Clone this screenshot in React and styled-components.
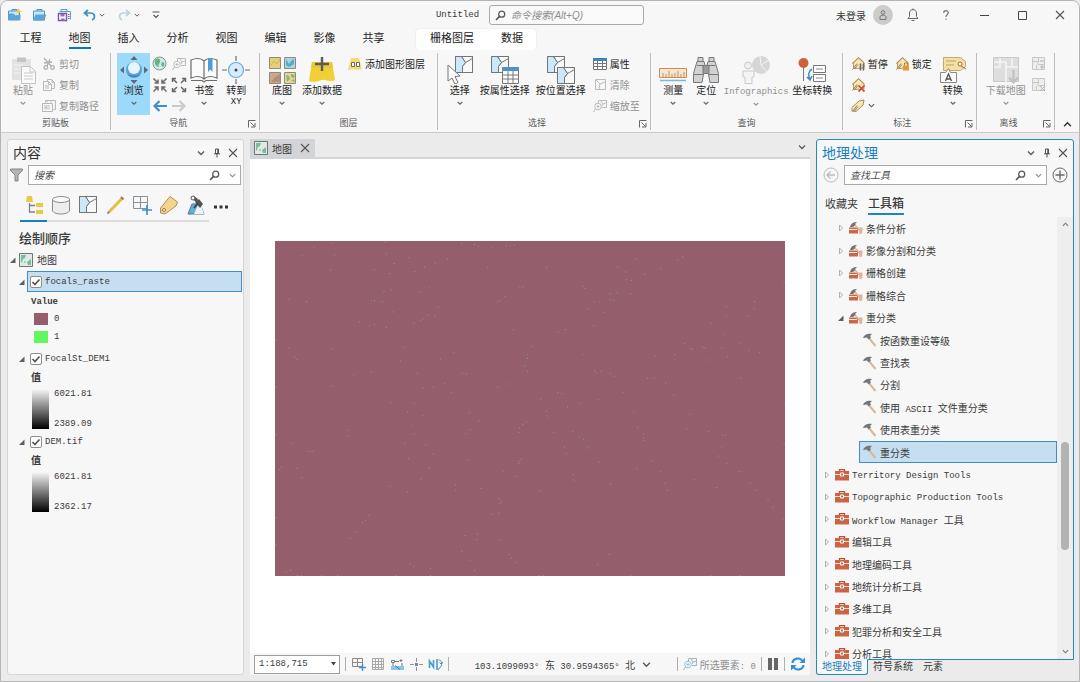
import React from 'react';
import styled, { createGlobalStyle, css } from 'styled-components';

const GlobalStyle = createGlobalStyle`
  * {
    box-sizing: border-box;
  }
  body {
    margin: 0;
    background: #ebebec;
    color: #3a3a3a;
    font-family: "Liberation Sans", "Noto Sans CJK SC", sans-serif;
    font-size: 10px;
  }
  button, input, select {
    font: inherit;
    color: inherit;
  }
  button {
    border: 0;
    padding: 0;
    background: none;
  }
`

const Window = styled.div`
  height: 100vh;
  display: flex;
  flex-direction: column;
  overflow: hidden;
  border: 1px solid #b4b4b4;
  border-radius: 8px 8px 0 0;
  background: #ebebec;
`

const Mono = styled.span`
  font-family: "Liberation Mono", "Noto Sans CJK SC", monospace;
  font-size: 9px;
  white-space: pre;
`

const Svg = styled.svg`
  flex: none;
  display: block;
  fill: none;
`

/* title bar */

const TitleBar = styled.header`
  display: grid;
  grid-template-columns: 1fr auto 1fr;
  align-items: center;
  height: 28px;
  background: #f7f7f7;
`

const QuickAccess = styled.div`
  display: flex;
  align-items: center;
  gap: 9px;
  padding-left: 5px;
`

const IconButton = styled.button`
  display: flex;
  align-items: center;
  justify-content: center;
  flex: none;
  width: ${props => props.$w || 16}px;
  height: ${props => props.$h || 16}px;
`

const SplitIcon = styled.div`
  display: flex;
  align-items: center;
`

const TitleCenter = styled.div`
  display: flex;
  align-items: center;
  gap: 10px;
`

const SearchBox = styled.label`
  display: flex;
  align-items: center;
  gap: 5px;
  height: 20px;
  border: 1px solid #a9a9a9;
  background: ${props => props.$round ? '#f9f9f9' : '#ffffff'};
  border-radius: ${props => props.$round ? 3 : 0}px;
  width: ${props => props.$round ? '155px' : 'auto'};
  flex: ${props => props.$round ? 'none' : '1'};
  padding: 0 1px 0 5px;
  min-width: 0;
  input {
    flex: 1;
    min-width: 0;
    width: 0;
    border: 0;
    padding: 0;
    outline: 0;
    background: none;
    font-style: italic;
  }
  input::placeholder {
    color: ${props => props.$round ? '#8d8d8d' : '#4c4c4c'};
    opacity: 1;
  }
`

const TitleRight = styled.div`
  display: flex;
  align-items: center;
  justify-content: flex-end;
`

const Avatar = styled.span`
  display: flex;
  align-items: center;
  justify-content: center;
  width: 20px;
  height: 20px;
  margin: 0 6px 0 7px;
  border-radius: 50%;
  background: #cbcbcb;
`

/* ribbon tabs */

const RibbonTabs = styled.nav`
  display: flex;
  height: 21px;
  padding-left: 5px;
  background: #f7f7f7;
`

const RibbonTab = styled.button`
  display: flex;
  justify-content: center;
  width: ${props => props.$w || 49}px;
  font-size: 11px;
  line-height: 19px;
  color: #222222;
  span {
    height: 20px;
    border-bottom: 2px solid ${props => props.$active ? '#0a78b5' : 'transparent'};
  }
`

const ContextTabs = styled.div`
  display: flex;
  margin-left: 18px;
  background: #ffffff;
  border-radius: 3px;
  box-shadow: 0 0 2px #dddddd;
`

/* ribbon */

const RibbonBar = styled.div`
  display: flex;
  padding-top: 3px;
  background: #f7f7f7;
  border-bottom: 1px solid #cfcac8;
`

const Group = styled.section`
  flex: ${props => props.$grow} 1 0;
  min-width: 0;
  margin-bottom: 2px;
  border-right: 1px solid #bdbdbd;
`

const GroupBody = styled.div`
  display: flex;
  height: 64px;
  padding-left: ${props => props.$pad || 5}px;
`

const GroupFoot = styled.div`
  display: flex;
  align-items: center;
  height: 13px;
  line-height: 13px;
  font-size: 9px;
  color: #5a5a5a;
  span {
    flex: 1;
    text-align: center;
  }
`

const BigButton = styled.button`
  display: flex;
  flex-direction: column;
  align-items: center;
  flex: none;
  width: ${props => props.$w}px;
  height: 62px;
  padding-top: 3px;
  line-height: 14px;
  white-space: nowrap;
  color: ${props => props.disabled ? '#919191' : '#222222'};
  background: ${props => props.$on ? '#9cdafb' : 'none'};
`

const SubText = styled(Mono)`
  line-height: 8px;
`

const SmallList = styled.div`
  display: flex;
  flex-direction: column;
  margin-left: ${props => props.$gap || 0}px;
`

const SmallRow = styled.div`
  display: flex;
  gap: 7px;
`

const SmallButton = styled.button`
  display: flex;
  align-items: center;
  gap: 3px;
  height: 21px;
  white-space: nowrap;
  color: ${props => props.disabled ? '#919191' : '#222222'};
`

const NavGrid = styled.div`
  display: grid;
  grid-template-columns: 19px 19px;
  grid-auto-rows: 21px;
  place-items: center;
`

const Collapse = styled.div`
  flex: 24 1 0;
  display: flex;
  align-items: flex-end;
  justify-content: center;
`

/* work area */

const Workspace = styled.main`
  flex: 1;
  min-height: 0;
  display: grid;
  grid-template-columns: 237fr 560fr 258fr;
  column-gap: 6px;
  padding: 6px 5px 6px 6px;
`

const Pane = styled.section`
  display: flex;
  flex-direction: column;
  min-width: 0;
  min-height: 0;
  background: #f7f7f7;
  border: 1px solid ${props => props.$active ? '#2387c2' : '#d6d6d6'};
  border-radius: 3px ${props => props.$active ? '3px 0 0' : '3px 3px 3px'};
`

const PaneHead = styled.div`
  display: flex;
  align-items: center;
  height: 25px;
  padding: 0 2px 0 5px;
  h2 {
    flex: 1;
    margin: 0;
    font-size: 14px;
    font-weight: 400;
    line-height: 24px;
    color: ${props => props.$active ? '#1a7fc0' : '#303030'};
  }
`

const SearchRow = styled.div`
  display: flex;
  align-items: center;
  gap: 5px;
  padding: 0 ${props => props.$end || 2}px 0 ${props => props.$start || 2}px;
`

const Toolbar = styled.div`
  display: flex;
  height: 37px;
  margin-left: 12px;
`

const ToolTab = styled.button`
  display: flex;
  align-items: center;
  justify-content: center;
  width: 27px;
  padding-top: 4px;
  border-bottom: 2px solid ${props => props.$active ? '#1580c0' : '#dcdcdc'};
`

const MoreButton = styled(IconButton)`
  height: 38px;
  padding-top: 5px;
  margin-left: 4px;
`

const Heading = styled.h3`
  margin: 6px 0 0 11px;
  font-size: 13px;
  line-height: 22px;
  font-weight: 500;
`

const LayerRow = styled.div`
  display: flex;
  align-items: center;
  gap: 2px;
  height: ${props => props.$root ? 19 : 21}px;
  padding-left: ${props => props.$root ? 1 : 10}px;
  margin-top: ${props => props.$root ? 0 : 2}px;
  span {
    margin-left: 2px;
  }
`

const LayerName = styled.label`
  display: flex;
  align-items: center;
  gap: 1px;
  flex: 1;
  height: 21px;
  margin-right: 1px;
  margin-left: -1px;
  border: 1px solid ${props => props.$selected ? '#3f8fc4' : 'transparent'};
  background: ${props => props.$selected ? '#c5def0' : 'none'};
`

const CheckBox = styled.span`
  display: grid;
  width: 12px;
  height: 12px;
  input, svg {
    grid-area: 1 / 1;
    width: 12px;
    height: 12px;
    margin: 0;
  }
  input {
    appearance: none;
    border: 1px solid #8e8e8e;
    border-radius: 2px;
    background: #ffffff;
  }
  svg {
    pointer-events: none;
    opacity: 0;
  }
  input:checked + svg {
    opacity: 1;
  }
`

const LegendTitle = styled.div`
  height: 18px;
  line-height: 18px;
  padding-left: 23px;
  font-weight: 700;
`

const LegendItem = styled.div`
  display: flex;
  align-items: center;
  gap: 6px;
  height: 18px;
  padding-left: 26px;
`

const Swatch = styled.span`
  width: 14px;
  height: 12px;
  background: ${props => props.$color};
`

const Ramp = styled.div`
  display: flex;
  gap: 5px;
  height: 40px;
  margin: 2px 0 0 24px;
`

const RampBar = styled.div`
  width: 17px;
  background: linear-gradient(#f7f7f7, #000000);
`

const RampLabels = styled.div`
  display: flex;
  flex-direction: column;
  justify-content: space-between;
  line-height: 10px;
`

/* map view */

const MapColumn = styled.section`
  display: flex;
  flex-direction: column;
  min-width: 0;
  min-height: 0;
`

const MapTabs = styled.div`
  display: flex;
  justify-content: space-between;
  height: 20px;
  border-bottom: 2px solid #d3d4d7;
`

const MapTab = styled.div`
  display: flex;
  align-items: center;
  gap: 4px;
  padding: 0 1px 0 4px;
  background: #d3d4d7;
`

const MapCanvas = styled.div`
  flex: 1;
  min-height: 0;
  display: flex;
  align-items: center;
  justify-content: center;
  padding-top: 5px;
  background: #ffffff;
  svg {
    width: 91%;
    background: #955e6c;
  }
`

const StatusBar = styled.footer`
  display: flex;
  align-items: center;
  height: 22px;
  padding: 0 4px;
  background: #f7f7f7;
`

const ScaleBox = styled.div`
  display: grid;
  align-items: center;
  width: 86px;
  height: 19px;
  select, svg {
    grid-area: 1 / 1;
  }
  select {
    height: 19px;
    padding: 0 4px;
    appearance: none;
    border: 1px solid #9c9c9c;
    border-radius: 0;
    background: #ffffff;
    font-family: "Liberation Mono", monospace;
    font-size: 9px;
  }
  svg {
    justify-self: end;
    margin-right: 4px;
    pointer-events: none;
  }
`

const Divider = styled.span`
  flex: none;
  width: 1px;
  height: 14px;
  margin: 0 5px;
  background: #b0b0b0;
`

const StatusIcons = styled.div`
  display: flex;
  gap: 3px;
`

const Coords = styled.button`
  display: flex;
  align-items: center;
  justify-content: center;
  gap: 7px;
  flex: 1;
  white-space: pre;
`

const Selected = styled.span`
  display: flex;
  align-items: center;
  gap: 3px;
  white-space: pre;
  color: #8f8f8f;
`

/* geoprocessing */

const ToolColumn = styled.div`
  display: flex;
  flex-direction: column;
  min-width: 0;
  min-height: 0;
  ${Pane} {
    flex: 1;
  }
`

const BoxTabs = styled.div`
  display: flex;
  gap: 10px;
  height: 32px;
  padding: 10px 0 0 8px;
  align-items: flex-start;
`

const BoxTab = styled.button`
  height: 20px;
  font-size: ${props => props.$active ? 12 : 11}px;
  font-weight: ${props => props.$active ? 500 : 400};
  line-height: 19px;
  border-bottom: 2px solid ${props => props.$active ? '#1a86c4' : 'transparent'};
`

const TreeArea = styled.div`
  flex: 1;
  min-height: 0;
  display: flex;
  overflow: hidden;
`

const Tree = styled.ul`
  flex: 1;
  height: calc(100% + 6px);
  margin: 0;
  padding: 0;
  list-style: none;
  display: grid;
  grid-auto-rows: 1fr;
`

const indent = { box: 6, set: 20, tool: 3 }

const TreeRow = styled.li`
  display: flex;
  align-items: center;
  gap: 4px;
  min-height: 0;
  padding-left: ${props => indent[props.$kind]}px;
  border: 1px solid transparent;
  border-left: 0;
  white-space: nowrap;
  ${props => props.$kind === 'tool' && css`
    margin-left: 42px;
    border-left: 1px solid transparent;
  `}
  ${props => props.$selected && css`
    border: 1px solid #3f8fc4;
    background: #c5def0;
  `}
`

const TreeName = styled.span`
  display: flex;
  align-items: center;
  gap: 3px;
`

const ScrollTrack = styled.div`
  display: flex;
  flex-direction: column;
  align-items: center;
  justify-content: space-between;
  width: 16px;
  padding: 4px 0;
  background: #eeeeee;
`

const ScrollThumb = styled.div`
  width: 8px;
  height: 25%;
  margin-top: auto;
  margin-bottom: 98px;
  border-radius: 4px;
  background: #b3b3b3;
`

const BottomTabs = styled.div`
  display: flex;
  height: 16px;
  z-index: 1;
  margin-top: -1px;
`

const BottomTab = styled.button`
  padding: 0 5px;
  line-height: 14px;
  ${props => props.$active && css`
    color: #1a7fc0;
    background: #f7f7f7;
    border: 1px solid #2387c2;
    border-top-color: #f7f7f7;
    border-radius: 0 0 3px 3px;
  `}
`

/* icons */

const Chevron = ({ size = 7, up, color = '#5a5a5a' }) => (
  <Svg width={size} height={size} viewBox="0 0 8 8" stroke={color} strokeWidth="1.3">
    <path d={up ? 'M1 5.5 4 2.5 7 5.5' : 'M1 2.5 4 5.5 7 2.5'} />
  </Svg>
)

const ButtonChevron = ({ color }) => (
  <Svg width="8" height="10" viewBox="0 0 8 10" stroke={color || '#6a6a6a'} strokeWidth="1.3">
    <path d="M1.7 4 4 6.2 6.3 4" />
  </Svg>
)

const CloseIcon = ({ size = 10 }) => (
  <Svg width={size} height={size} viewBox="0 0 10 10" stroke="#555" strokeWidth="1.1">
    <path d="M1 1 9 9M9 1 1 9" />
  </Svg>
)

const PinIcon = () => (
  <Svg width="8" height="10" viewBox="0 0 8 10" stroke="#555">
    <path d="M2.500 1h3v4.500h-3zM1 5.800h6M4 6v3.500" />
    <path d="M5 1v4.500" strokeWidth="1.500" />
  </Svg>
)

const SearchIcon = () => (
  <Svg width="11" height="11" viewBox="0 0 11 11" stroke="#5a5a5a" strokeWidth="1.3">
    <circle cx="6.700" cy="4.200" r="3" />
    <path d="M4.500 6.400 1 10" strokeWidth="1.700" />
  </Svg>
)

const Launcher = () => (
  <IconButton $w={14} $h={12} aria-label="对话框">
    <Svg width="8" height="8" viewBox="0 0 8 8" stroke="#666">
      <path d="M.5 7.500V.5h7M2.500 2.500l4 4M7 3v4H3" />
    </Svg>
  </IconButton>
)

const ProjectIcon = ({ kind }) => (
  <Svg width="15" height="14" viewBox="0 0 15 14">
    {kind === 'save' ? (
      <>
        <path d="M4 3.500V1.500h6v2M2.500 3.500h11v8" stroke="#5e9bcb" />
        <path d="M1.500 5.500h8v7h-8z" fill="#fff" stroke="#7757a5" strokeWidth="1.400" />
        <path d="M3.500 6h4v2.500h-4zM4 10.500h3.500v2H4z" fill="#8d70b5" />
        <path d="M11 6.500h1.500M11 8.500h1.500M11 10.500h1.500" stroke="#7757a5" />
      </>
    ) : (
      <>
        <path d="M5 3V1.500h5V3M1.500 3h11v9h-11z" fill="#cde6f7" stroke="#4a96cc" />
        <path d={kind === 'new' ? 'M1.5 5.5h5l2 2 5-1v5.5h-12z' : 'M3.5 6.5h11l-2.5 6h-11z'} fill="#5ba5d8" />
        {kind === 'new' && <path d="m11.500 0 1 2.500 2.500 1-2.500 1-1 2.500-1-2.500-2.500-1 2.500-1z" fill="#f3cb3f" />}
      </>
    )}
  </Svg>
)

const UndoIcon = ({ redo }) => (
  <Svg width="13" height="12" viewBox="0 0 13 12" stroke={redo ? '#b9d5e3' : '#3d8fcb'} strokeWidth="1.700">
    <g transform={redo ? 'matrix(-1 0 0 1 13 0)' : undefined}>
      <path d="M5 1 1.500 4 5 7M1.500 4h6c5 0 5 5.500 1.500 7" />
    </g>
  </Svg>
)

const MapIcon = () => (
  <Svg width="14" height="14" viewBox="0 0 14 14">
    <path d="M.5.5h13v13H.5z" fill="#dfe9ea" stroke="#6f7678" />
    <path d="M2 2h5l-1 3-2 1-1 3-1 1zM8 9l4-3v6H9z" fill="#7bbd92" />
    <path d="M5 8h2v2H5z" fill="#a8d3b6" />
  </Svg>
)

const PasteIcon = () => (
  <Svg width="28" height="28" viewBox="0 0 28 28">
    <path d="M3 3h19v21H3z" fill="#e2e2e2" />
    <path d="M8 1.500h9V6H8z" fill="#c4c4c4" />
    <path d="M5 9h9M5 13h7M5 17h6" stroke="#f2f2f2" />
    <path d="M12.500 10.500h9l5 5v12h-14z" fill="#fafafa" stroke="#c2c2c2" />
    <path d="M21 11v5h5M15 17h9M15 20h9M15 23h9" stroke="#cbcbcb" />
  </Svg>
)

const BrowseIcon = () => (
  <Svg width="28" height="28" viewBox="0 0 28 28">
    <path d="m14 0 3.500 4h-7zM14 28l3.500-4h-7zM0 14l4-3.500v7zM28 14l-4-3.500v7z" fill="#5c6b78" />
    <circle cx="14" cy="14" r="8" fill="#5aa3d8" />
    <circle cx="14" cy="12" r="6" fill="#e6f5fe" />
    <path d="M7.500 18c2 4 11 4 13 0-3 2-9 2-13 0z" fill="#3a80ba" />
  </Svg>
)

const BookmarkIcon = () => (
  <Svg width="28" height="28" viewBox="0 0 28 28" stroke="#6c6c6c" strokeWidth="1.200">
    <path d="M14 5C11 2 6 2 1 4v18c5-2 10-2 13 1 3-3 8-3 13-1V4c-5-2-10-2-13 1zM14 5v18" fill="#fbfbfb" />
    <path d="M1 24.500h11l2 1.500 2-1.500h11" />
    <path d="M18 2h4.500v14l-2.200-2.500L18 16z" fill="#4e9cd5" stroke="none" />
  </Svg>
)

const GoToIcon = () => (
  <Svg width="28" height="28" viewBox="0 0 28 28" stroke="#6d6d6d" strokeWidth="1.200">
    <path d="M14 0v5M14 23v5M0 14h5M23 14h5" />
    <circle cx="14" cy="14" r="7.500" fill="#d8edfb" stroke="#6aabda" />
    <circle cx="14" cy="14" r="1.500" fill="#444" stroke="none" />
  </Svg>
)

const CutIcon = () => (
  <Svg width="14" height="14" viewBox="0 0 14 14" stroke="#b0b0b0" strokeWidth="1.300">
    <path d="M2 1l7 8M8 2 5 9M2 6l8-1" />
    <circle cx="3.800" cy="10.500" r="1.800" />
    <circle cx="10.500" cy="10.500" r="1.800" />
  </Svg>
)

const CopyIcon = ({ path }) => (
  <Svg width="14" height="14" viewBox="0 0 14 14" stroke="#b8b8b8">
    {path ? (
      <path d="M3.5 3.5v-2h10v9h-2M.5 4.500h10v8H.5zM2 7h6M3 10.500V8.500h2v2M7 8.500v2M5 1.500v2M9 1.500v2" />
    ) : (
      <path d="M5.500 3.500v-2h4l3 3v6h-3M1.500 3.500h5l3 3v6h-8zM6.500 3.500v3h3M3 8h4M3 10h4M10 1.500v3h2" />
    )}
  </Svg>
)

const GlobeIcon = () => (
  <Svg width="15" height="15" viewBox="0 0 15 15">
    <circle cx="7.500" cy="7.500" r="6.500" fill="#cde9ee" stroke="#7a9a96" />
    <path d="M3 4c3-3 6-1 5 2s-2 2-1 5c-3 0-5-4-4-7zM10 6c3 0 3 3 1 5-2-1-2-3-1-5z" fill="#69b37c" />
  </Svg>
)

const ZoomLayerIcon = ({ blue }) => (
  <Svg width="14" height="14" viewBox="0 0 14 14" stroke={blue ? '#a5b4bf' : '#bdbdbd'}>
    <path d="M5.500 4V1.500h8v7H9M8 2l2 3 3-1M10 5 9 7" />
    <circle cx="5" cy="7.500" r="3.300" stroke={blue ? '#93bfdd' : '#bdbdbd'} />
    <path d="M3.500 7.500h3M5 6v3M2.500 10 .5 13" stroke={blue ? '#93bfdd' : '#bdbdbd'} />
  </Svg>
)

const FourArrows = ({ out }) => {
  const d = out ? 'M6 6 1.5 1.5M1.5 5V1.5H5' : 'M1.5 1.5 6 6M6 2.5V6H2.5'
  return (
    <Svg width="16" height="16" viewBox="0 0 16 16" stroke="#6a6a6a" strokeWidth="1.500">
      <path d={d} />
      <path d={d} transform="matrix(-1 0 0 1 16 0)" />
      <path d={d} transform="matrix(1 0 0 -1 0 16)" />
      <path d={d} transform="matrix(-1 0 0 -1 16 16)" />
    </Svg>
  )
}

const Arrow = ({ right, color }) => (
  <Svg width="14" height="12" viewBox="0 0 14 12" stroke={color} strokeWidth="2.200">
    <path d={right ? 'M0 6h12M7.5 1l5 5-5 5' : 'M14 6H2M6.5 1l-5 5 5 5'} />
  </Svg>
)

const BasemapIcon = () => (
  <Svg width="28" height="28" viewBox="0 0 28 28" stroke="#8b8b83">
    <path d="M1.500 1.500h11v11h-11z" fill="#e6cf76" />
    <path d="M16.500 1.500h11v11h-11z" fill="#a8d8da" />
    <path d="M1.500 16.500h11v11h-11z" fill="#cdaa8d" />
    <path d="M16.500 16.500h11v11h-11z" fill="#ecd588" />
    <path d="M3 9l3-4 3 3 3-5" stroke="#cdb45c" />
    <path d="M18 3l3 5 2-3 3-2v5l-5 3-3-2z" fill="#5da8c8" stroke="none" />
    <path d="M3 26l4-5 5-3v8z" fill="#b98c74" stroke="none" />
    <path d="M18 19l3 1 1 3-3 3zM23 18l4 1-1 3-3-1zM23 25l3-2 1 3z" fill="#86b87a" stroke="none" />
  </Svg>
)

const AddDataIcon = () => (
  <Svg width="28" height="28" viewBox="0 0 28 28">
    <path d="M4 6h20l3 18c-6 3-9-1-13 0s-9 3-13 1z" fill="#f1cf35" />
    <path d="M4 6h20l1 6H3z" fill="#e9c93c" />
    <path d="M14 1v14M7 8h14" stroke="#5b5b5b" strokeWidth="2.400" />
  </Svg>
)

const GraphicsIcon = () => (
  <Svg width="14" height="14" viewBox="0 0 14 14">
    <path d="M3 1h8l3 11c-4 2-9-1-14 1z" fill="#f2dc74" />
    <path d="M3.500 5.500h3v4h-3zM8.500 5.500h3v4h-3z" fill="#fff" stroke="#6b6b6b" />
  </Svg>
)

const Parcel = ({ x, y }) => (
  <g transform={`translate(${x} ${y})`} stroke="#757575">
    <path d="M.5.5h17v16H.5z" fill="#f8f8f8" />
    <path d="M.5.5h6l4 6-3 4v6h-7z" fill="#cde8f8" stroke="#76a8c8" />
    <path d="M6.5.5l4 6 7-4M10.500 6.500l-3 4v6M.5.5h17v16H.5z" />
  </g>
)

const SelectIcon = () => (
  <Svg width="28" height="28" viewBox="0 0 28 28">
    <Parcel x={9} y={0} />
    <path d="M2 9v16l4-3 3 6 3-1.500-3-6 5-.5z" fill="#fff" stroke="#777" />
  </Svg>
)

const SelectAttrIcon = () => (
  <Svg width="28" height="28" viewBox="0 0 28 28">
    <Parcel x={0} y={0} />
    <path d="M11.500 11.500h16v16h-16z" fill="#fff" stroke="#777" />
    <path d="M11 11h17v4H11z" fill="#4b93c9" />
    <path d="M12 19h15M12 23h15M17 15v12M22 15v12" stroke="#777" />
  </Svg>
)

const SelectLocIcon = () => (
  <Svg width="28" height="28" viewBox="0 0 28 28">
    <Parcel x={0} y={0} />
    <Parcel x={10} y={11} />
  </Svg>
)

const TableIcon = () => (
  <Svg width="14" height="12" viewBox="0 0 14 12" stroke="#777">
    <path d="M.5.5h13v11H.5zM1 5.500h12M1 8.500h12M4.500 3v8M9.500 3v8" fill="#fff" />
    <path d="M0 1.500h14" stroke="#3f86bf" strokeWidth="3" />
  </Svg>
)

const ClearIcon = () => (
  <Svg width="14" height="12" viewBox="0 0 14 12" stroke="#bcbcbc">
    <path d="M2.500.5h10v10h-10zM3 1l4 4 5-2M7 5 6 10" />
  </Svg>
)

const RulerIcon = () => (
  <Svg width="28" height="28" viewBox="0 0 28 28">
    <path d="M.5 12.500h27v9H.5z" fill="#f8e7cf" stroke="#c78d5d" />
    <path d="M4 21v-4M7 21v-3M10 21v-6M13 21v-3M16 21v-4M19 21v-6M22 21v-3M25 21v-5" stroke="#c78d5d" />
    <path d="M1 24.500h26" stroke="#7db7df" strokeWidth="1.500" />
  </Svg>
)

const BinocularIcon = () => (
  <Svg width="28" height="28" viewBox="0 0 28 28" stroke="#777">
    <path d="M6 1.500h5v4H6zM17 1.500h5v4h-5zM5 5.500h7l1 4-3 17H1.500v-9zM23 5.500h-7l-1 4 3 17h8.500v-9z" fill="#d2d2d2" />
    <path d="M11 9.500h6v8h-6z" fill="#9b9b9b" />
    <path d="M2 18.500h9M17 18.500h9M5 9.500h7M16 9.500h7" />
  </Svg>
)

const InfographicsIcon = () => (
  <Svg width="30" height="28" viewBox="0 0 30 28" stroke="#c9c9c9">
    <circle cx="20" cy="9" r="9" fill="#d6d6d6" stroke="none" />
    <path d="M20 9 19 0M20 9l8-5M20 9l6 7" stroke="#f4f4f4" />
    <circle cx="7" cy="9.500" r="3.500" fill="#efefef" />
    <path d="M2 15h11v6h-2v6.500H4V21H2z" fill="#f5f5f5" />
  </Svg>
)

const CoordIcon = () => (
  <Svg width="28" height="28" viewBox="0 0 28 28">
    <path d="M5.500 8v17" stroke="#777" />
    <circle cx="5.500" cy="7" r="5" fill="#d0603b" />
    <path d="M15.500 9.500h12v7h-12zM15.500 18.500h12v7h-12z" fill="#fff" stroke="#777" />
    <path d="M18 13h7M18 22h7" stroke="#888" />
    <path d="M14 13c-4 2-4 7-2 10M9 21l3 3 2-4" stroke="#3d8fcb" strokeWidth="1.500" />
  </Svg>
)

const LabelIcon = ({ mark }) => (
  <Svg width="14" height="15" viewBox="0 0 14 15">
    {mark ? (
      <>
        <path d="M2.500 12.500V7L7.500 2l5.500 5v5z" fill="#f8e8b8" stroke="#b79a5c" />
        <path d="M1 7.500 7.500 1.500l6 5.500" stroke="#a98d56" />
      </>
    ) : (
      <path d="M1 9.500 8 3l5-1-1 5-7 6.500-4-.5z" fill="#f8e8b8" stroke="#a98d56" />
    )}
    <path d="M1.500 13.500 6 7.500M3.500 13 7 8.500" stroke="#9a8256" />
    {mark === 'pause' && <path d="M9.500 7.500v7M12.500 7.500v7" stroke="#6a6a6a" strokeWidth="1.600" />}
    {mark === 'lock' && (
      <>
        <path d="M8 9.500h6v5H8z" fill="#e29b2f" />
        <path d="M9.500 9.500V7h3v2.500" stroke="#c47d22" />
      </>
    )}
    {mark === 'x' && <path d="M7.500 8.500l6 6M13.500 8.500l-6 6" stroke="#d64a30" strokeWidth="1.700" />}
  </Svg>
)

const ConvertIcon = () => (
  <Svg width="28" height="28" viewBox="0 0 28 28">
    <path d="M4.500 1.500h17l5 4v5l-5 4h-17z" fill="#f6e0a0" stroke="#c3a96e" />
    <path d="M7 5h10M7 9h8" stroke="#b8a16c" />
    <circle cx="21" cy="8" r="2" fill="#fff" stroke="#8a7449" />
    <path d="M22 10l5 3" stroke="#8a7449" />
    <path d="M1.500 16.500h5l3-4 2 4h6v10h-16z" fill="#fafafa" stroke="#888" />
    <path d="M6.500 25 9.500 18l3 7M7.500 23h4" stroke="#555" strokeWidth="1.300" />
  </Svg>
)

const DownloadMapIcon = () => (
  <Svg width="28" height="28" viewBox="0 0 28 28" stroke="#c9c9c9">
    <path d="M1.500 1.500h25v24h-25z" fill="#dedede" />
    <path d="M2 6h12v5h12M8 2v9H2M14 11v15M20 2v9" stroke="#f5f5f5" strokeWidth="1.500" />
    <path d="M21.500 14v12M17 21.500l4.500 5 4.500-5" stroke="#c1c1c1" strokeWidth="2.200" />
  </Svg>
)

const OfflineIcon = ({ remove }) => (
  <Svg width="15" height="15" viewBox="0 0 15 15" stroke="#c8c8c8">
    <path d="M1.500 1.500h12v12h-12zM2 5.500h5v3h6M7.500 2v4M5.500 9v4" fill="#ededed" />
    <path d={remove ? 'M9 9l5 5M14 9l-5 5' : 'M9 5h4M9 11h4M11 9v4'} stroke="#b4b4b4" />
  </Svg>
)

const Caret = ({ open }) => (
  <Svg width="8" height="10" viewBox="0 0 8 10">
    {open ? <path d="M6.500 2.500v5.500H1z" fill="#5f5f5f" /> : <path d="M2.500 2 5.500 5 2.500 8z" stroke="#b0b0b0" fill="#f7f7f7" />}
  </Svg>
)

const ToolboxIcon = () => (
  <Svg width="14" height="12" viewBox="0 0 14 12">
    <path d="M4.500 2.500v-2h5v2" stroke="#b4502f" strokeWidth="1.300" />
    <path d="M0 2h14v9.500H0z" fill="#cb6446" />
    <path d="M0 5.500h14" stroke="#f5d8ce" />
    <path d="M5.500 4h3v3h-3z" fill="#cb6446" stroke="#fff" />
  </Svg>
)

const ToolsetIcon = () => (
  <Svg width="14" height="14" viewBox="0 0 14 14">
    <path d="M1 6c1-4 4-5 7-5L6 3l1 1-3 2z" fill="#747474" />
    <path d="M0 6.500h9V12.500H0z" fill="#c9694c" />
    <path d="M0 8.500h8" stroke="#f8e6df" />
    <path d="M6 4l7 8" stroke="#d9b896" strokeWidth="1.500" />
    <path d="M9.500 6.500h4v3l-1 3.500h-2z" fill="#e6b295" />
  </Svg>
)

const HammerIcon = () => (
  <Svg width="14" height="14" viewBox="0 0 14 14">
    <path d="M5.500 4.500 12.500 13" stroke="#d6ba98" strokeWidth="2" />
    <path d="M0 5C1 2 4 0 9 1L7 3l1 1.500L5.500 6.500 4 4.500z" fill="#72777b" />
  </Svg>
)

const FilterIcon = () => (
  <Svg width="13" height="14" viewBox="0 0 13 14">
    <path d="M.5 1h12v1.500L8 7v6H5V7L.5 2.500z" fill="#b4b4b4" stroke="#858585" />
  </Svg>
)

const contentTabs = [
  {
    name: '按绘制顺序列出',
    art: (
      <>
        <path d="M3 1h5l1 6H2zM12 8h7v4h-7zM12 15h7v4h-7z" fill="#e8ca45" />
        <path d="M5.500 8v9H11M5.500 10.500H11" stroke="#808080" strokeWidth="1.300" />
      </>
    ),
  },
  {
    name: '按数据源列出',
    art: (
      <>
        <path d="M1.500 4v12c2 4 15 4 17 0V4" fill="#ededed" stroke="#8d8d8d" />
        <ellipse cx="10" cy="4.500" rx="8.500" ry="3" fill="#fafafa" stroke="#8d8d8d" />
      </>
    ),
  },
  { name: '按选择列出', art: <Parcel x={1} y={1} /> },
  {
    name: '按编辑列出',
    art: (
      <>
        <path d="M4 17 17 3.500" stroke="#e7bf3e" strokeWidth="3" />
        <path d="M16 2l2.500 2.500" stroke="#9d7a5d" strokeWidth="2" />
        <path d="M2 19l1-3 2 2z" fill="#777" />
      </>
    ),
  },
  {
    name: '按捕捉列出',
    art: (
      <>
        <path d="M1.500 1.500h14v12h-14zM8.500 1.500v12M1.500 7.500h14" stroke="#8a9095" />
        <path d="M15 10v10M10 15h10" stroke="#3d8fcb" strokeWidth="1.700" />
      </>
    ),
  },
  {
    name: '按标注列出',
    art: (
      <>
        <path d="M1.500 13 11 1.500l7.500 5.500L17 11 6 19l-4.500-1z" fill="#f3d58d" stroke="#b0905a" />
        <circle cx="5" cy="15" r="1.500" fill="#fff" stroke="#8a7449" />
      </>
    ),
  },
  {
    name: '按图表列出',
    art: (
      <>
        <path d="M2 19 6 9h8l4 10z" fill="#63aedc" stroke="#4a7b9d" />
        <path d="M8 19l4-9h3l3 9z" fill="#eaf3f8" />
        <path d="M5 3l3-2 4 3-2 3zM9 7l4-3 4 5-3 4z" fill="#555" />
        <circle cx="7" cy="3" r="2" fill="#fff" stroke="#555" />
        <path d="M8 13l4-5" stroke="#444" strokeWidth="2" />
      </>
    ),
  },
]

/* data */

const ribbonTabs = ['工程', '地图', '插入', '分析', '视图', '编辑', '影像', '共享']

const toolTree = [
  { kind: 'set', name: '条件分析' },
  { kind: 'set', name: '影像分割和分类' },
  { kind: 'set', name: '栅格创建' },
  { kind: 'set', name: '栅格综合' },
  { kind: 'set', name: '重分类', open: true },
  { kind: 'tool', name: '按函数重设等级' },
  { kind: 'tool', name: '查找表' },
  { kind: 'tool', name: '分割' },
  { kind: 'tool', name: '使用 ASCII 文件重分类' },
  { kind: 'tool', name: '使用表重分类' },
  { kind: 'tool', name: '重分类', selected: true },
  { kind: 'box', name: 'Territory Design Tools' },
  { kind: 'box', name: 'Topographic Production Tools' },
  { kind: 'box', name: 'Workflow Manager 工具' },
  { kind: 'box', name: '编辑工具' },
  { kind: 'box', name: '地理编码工具' },
  { kind: 'box', name: '地统计分析工具' },
  { kind: 'box', name: '多维工具' },
  { kind: 'box', name: '犯罪分析和安全工具' },
  { kind: 'box', name: '分析工具' },
]

const treeIcons = { set: ToolsetIcon, tool: HammerIcon, box: ToolboxIcon }

// cells of class 1, in thirds of a map pixel
const cells = [
  [132, 50], [186, 37], [193, 71], [95, 74], [181, 116], [345, 33], [348, 68], [416, 80], [372, 97], [312, 116],
  [358, 127], [433, 121], [463, 107], [495, 95], [531, 83], [574, 38], [613, 40], [624, 46], [664, 50], [709, 44],
  [720, 44], [732, 42], [652, 108], [828, 108], [1096, 83], [1042, 107], [1064, 122], [1067, 145], [1082, 148],
  [1122, 129], [1171, 113], [1222, 86], [1236, 77], [57, 204], [109, 211], [303, 208], [313, 209], [336, 211],
  [341, 181], [363, 176], [450, 181], [477, 170], [503, 227], [368, 242], [267, 272], [297, 284], [312, 281],
  [348, 288], [431, 276], [452, 267], [459, 263], [474, 252], [494, 255], [683, 212], [689, 208], [704, 196],
  [748, 170], [758, 167], [729, 295], [863, 302], [885, 295], [938, 165], [943, 172], [971, 212], [985, 212],
  [952, 233], [999, 243], [970, 283], [1019, 187], [1018, 205], [1028, 208], [1040, 184], [1080, 188], [1367, 226],
  [1367, 253], [1431, 253], [1450, 232], [1452, 211], [1321, 276], [1361, 310], [1242, 337], [1259, 352],
  [1265, 353], [1297, 348], [1303, 350], [1317, 386], [1354, 350], [1370, 376], [1409, 335], [1434, 358],
  [1467, 364], [1213, 370], [1212, 383], [1153, 373], [1410, 440], [1185, 455], [1131, 441], [1151, 440],
  [1210, 491], [940, 370], [972, 418], [977, 424], [991, 420], [1019, 427], [1032, 435], [1057, 483], [983, 505],
  [930, 516], [891, 527], [874, 487], [862, 484], [811, 503], [828, 540], [830, 554], [786, 346], [772, 370],
  [771, 381], [763, 404], [771, 420], [718, 458], [682, 468], [550, 363], [511, 383], [400, 348], [391, 389],
  [440, 426], [575, 426], [588, 428], [523, 457], [543, 484], [489, 468], [458, 469], [303, 421], [250, 430],
  [186, 353], [186, 464], [57, 349], [74, 377], [81, 385], [362, 514], [431, 516], [412, 543], [457, 553],
  [427, 578], [431, 608], [403, 636], [467, 641], [489, 668], [415, 682], [477, 711], [452, 743], [411, 782],
  [360, 764], [597, 545], [626, 569], [599, 595], [586, 607], [593, 687], [768, 572], [757, 579], [747, 590],
  [746, 603], [849, 603], [907, 600], [926, 617], [939, 625], [949, 646], [956, 650], [882, 647], [887, 666],
  [985, 692], [1090, 543], [1101, 588], [1119, 608], [1119, 620], [1120, 627], [1143, 688], [1171, 721],
  [1099, 713], [1257, 549], [1248, 592], [1314, 600], [1356, 610], [1365, 612], [1353, 646], [1344, 674],
  [1368, 696], [1405, 720], [1415, 721], [1439, 756], [1455, 777], [1492, 806], [1507, 827], [1272, 745],
  [1338, 768], [1184, 756], [1190, 777], [1020, 757], [907, 730], [910, 746], [810, 778], [752, 684], [745, 689],
  [746, 696], [698, 719], [735, 735], [632, 771], [555, 760], [556, 776], [686, 802], [692, 809], [689, 816],
  [685, 845], [666, 849], [66, 636], [111, 659], [120, 661], [128, 659], [234, 597], [235, 613], [34, 707],
  [27, 714], [81, 711], [95, 739], [296, 851], [286, 866], [277, 872], [258, 902], [240, 921], [584, 912],
  [621, 907], [619, 924], [690, 926], [574, 959], [599, 986], [613, 1017], [717, 970], [722, 980], [737, 993],
  [1016, 969], [981, 999], [420, 997], [431, 1004], [480, 1010], [61, 1016], [48, 1021], [18, 327], [18, 468],
  [18, 610], [18, 858], [18, 940], [1540, 153], [1540, 515], [1540, 637], [1537, 862], [82, 1032], [93, 1032],
  [155, 1032], [202, 1032], [378, 1032], [480, 1032], [805, 1032], [818, 1032], [1080, 1032], [1320, 1032],
  [1408, 1032],
]

// latin runs are set in the monospaced face
const Mixed = ({ text }) => (
  <span>
    {text.split(/([A-Za-z0-9.:°+_() -]+)/).map((part, i) => (i % 2 ? <Mono key={i}>{part}</Mono> : part))}
  </span>
)

const PaneTools = () => (
  <>
    <IconButton aria-label="菜单"><Chevron size={8} /></IconButton>
    <IconButton aria-label="自动隐藏"><PinIcon /></IconButton>
    <IconButton aria-label="关闭"><CloseIcon /></IconButton>
  </>
)

const Big = ({ icon, text, w, on, disabled, drop, sub }) => (
  <BigButton $w={w} $on={on} disabled={disabled}>
    {icon}
    <Mixed text={text} />
    {sub && <SubText>{sub}</SubText>}
    {drop && <ButtonChevron color={disabled ? '#999' : undefined} />}
  </BigButton>
)

const RibbonGroup = ({ name, grow, pad, launcher, children }) => (
  <Group $grow={grow}>
    <GroupBody $pad={pad}>{children}</GroupBody>
    <GroupFoot><span>{name}</span>{launcher && <Launcher />}</GroupFoot>
  </Group>
)

const Layer = ({ name, selected }) => (
  <LayerRow>
    <Caret open />
    <LayerName $selected={selected}>
      <CheckBox>
        <input type="checkbox" defaultChecked />
        <svg viewBox="0 0 12 12" fill="none" stroke="#555" strokeWidth="1.700"><path d="M2.500 6 5 8.500 9.500 3.500" /></svg>
      </CheckBox>
      <Mono>{name}</Mono>
    </LayerName>
  </LayerRow>
)

const RampLegend = ({ high, low }) => (
  <>
    <LegendTitle>值</LegendTitle>
    <Ramp>
      <RampBar />
      <RampLabels><Mono>{high}</Mono><Mono>{low}</Mono></RampLabels>
    </Ramp>
  </>
)

function Ribbon() {
  return (
    <RibbonBar>
      <RibbonGroup name="剪贴板" grow={110} pad={7}>
        <Big icon={<PasteIcon />} text="粘贴" w={30} disabled drop />
        <SmallList $gap={4}>
          <SmallButton disabled><CutIcon />剪切</SmallButton>
          <SmallButton disabled><CopyIcon />复制</SmallButton>
          <SmallButton disabled><CopyIcon path />复制路径</SmallButton>
        </SmallList>
      </RibbonGroup>
      <RibbonGroup name="导航" grow={149} pad={6} launcher>
        <Big icon={<BrowseIcon />} text="浏览" w={33} on drop />
        <NavGrid>
          <IconButton aria-label="全图"><GlobeIcon /></IconButton>
          <IconButton aria-label="缩放至所选"><ZoomLayerIcon /></IconButton>
          <IconButton aria-label="放大"><FourArrows /></IconButton>
          <IconButton aria-label="缩小"><FourArrows out /></IconButton>
          <IconButton aria-label="上一视图"><Arrow color="#3f8fcd" /></IconButton>
          <IconButton aria-label="下一视图"><Arrow right color="#cacaca" /></IconButton>
        </NavGrid>
        <Big icon={<BookmarkIcon />} text="书签" w={32} drop />
        <Big icon={<GoToIcon />} text="转到" sub="XY" w={32} />
      </RibbonGroup>
      <RibbonGroup name="图层" grow={178} pad={4}>
        <Big icon={<BasemapIcon />} text="底图" w={36} drop />
        <Big icon={<AddDataIcon />} text="添加数据" w={44} drop />
        <SmallList $gap={4}>
          <SmallButton><GraphicsIcon />添加图形图层</SmallButton>
        </SmallList>
      </RibbonGroup>
      <RibbonGroup name="选择" grow={214} pad={4} launcher>
        <Big icon={<SelectIcon />} text="选择" w={36} drop />
        <Big icon={<SelectAttrIcon />} text="按属性选择" w={54} />
        <Big icon={<SelectLocIcon />} text="按位置选择" w={58} />
        <SmallList $gap={3}>
          <SmallButton><TableIcon />属性</SmallButton>
          <SmallButton disabled><ClearIcon />清除</SmallButton>
          <SmallButton disabled><ZoomLayerIcon />缩放至</SmallButton>
        </SmallList>
      </RibbonGroup>
      <RibbonGroup name="查询" grow={192} pad={5}>
        <Big icon={<RulerIcon />} text="测量" w={34} drop />
        <Big icon={<BinocularIcon />} text="定位" w={32} drop />
        <Big icon={<InfographicsIcon />} text="Infographics" w={68} disabled drop />
        <Big icon={<CoordIcon />} text="坐标转换" w={44} />
      </RibbonGroup>
      <RibbonGroup name="标注" grow={134} pad={8} launcher>
        <SmallList>
          <SmallRow>
            <SmallButton><LabelIcon mark="pause" />暂停</SmallButton>
            <SmallButton><LabelIcon mark="lock" />锁定</SmallButton>
          </SmallRow>
          <SmallButton aria-label="移除标注"><LabelIcon mark="x" /></SmallButton>
          <SmallButton aria-label="标注样式"><LabelIcon /><Chevron /></SmallButton>
        </SmallList>
        <Big icon={<ConvertIcon />} text="转换" w={42} drop />
      </RibbonGroup>
      <RibbonGroup name="离线" grow={78} pad={7} launcher>
        <Big icon={<DownloadMapIcon />} text="下载地图" w={44} disabled drop />
        <SmallList $gap={3}>
          <SmallButton disabled aria-label="同步"><OfflineIcon /></SmallButton>
          <SmallButton disabled aria-label="移除"><OfflineIcon remove /></SmallButton>
        </SmallList>
      </RibbonGroup>
      <Collapse><IconButton aria-label="折叠功能区"><Chevron size={9} up color="#333" /></IconButton></Collapse>
    </RibbonBar>
  )
}

function Contents() {
  return (
    <Pane>
      <PaneHead><h2>内容</h2><PaneTools /></PaneHead>
      <SearchRow>
        <FilterIcon />
        <SearchBox>
          <input type="text" placeholder="搜索" aria-label="搜索" />
          <SearchIcon />
          <IconButton $w={14} aria-label="搜索选项"><Chevron color="#888" /></IconButton>
        </SearchBox>
      </SearchRow>
      <Toolbar>
        {contentTabs.map((tab, i) => (
          <ToolTab key={tab.name} $active={i === 0} aria-label={tab.name}>
            <Svg width="20" height="20" viewBox="0 0 20 20">{tab.art}</Svg>
          </ToolTab>
        ))}
        <MoreButton aria-label="更多">
          <Svg width="14" height="4" viewBox="0 0 14 4">
            <path d="M0 .5h3v3H0zM5.500.5h3v3h-3zM11 .5h3v3h-3z" fill="#333" />
          </Svg>
        </MoreButton>
      </Toolbar>
      <Heading>绘制顺序</Heading>
      <LayerRow $root><Caret open /><MapIcon /><span>地图</span></LayerRow>
      <Layer name="focals_raste" selected />
      <LegendTitle><Mono>Value</Mono></LegendTitle>
      <LegendItem><Swatch $color="#955e6c" /><Mono>0</Mono></LegendItem>
      <LegendItem><Swatch $color="#63f75f" /><Mono>1</Mono></LegendItem>
      <Layer name="FocalSt_DEM1" />
      <RampLegend high="6021.81" low="2389.09" />
      <Layer name="DEM.tif" />
      <RampLegend high="6021.81" low="2362.17" />
    </Pane>
  )
}

function MapView() {
  return (
    <MapColumn>
      <MapTabs>
        <MapTab>
          <MapIcon />地图
          <IconButton $w={18} aria-label="关闭地图"><CloseIcon /></IconButton>
        </MapTab>
        <IconButton aria-label="视图列表"><Chevron size={8} /></IconButton>
      </MapTabs>
      <MapCanvas>
        <Svg viewBox="15 30 1527 1005">
          {cells.map(([x, y]) => (
            <rect key={`${x}-${y}`} x={x - 1} y={y - 1} width="3" height="3" fill="#79c46e" opacity="0.75" />
          ))}
        </Svg>
      </MapCanvas>
      <StatusBar>
        <ScaleBox>
          <select aria-label="比例尺" defaultValue="1:188,715"><option>1:188,715</option></select>
          <Svg width="5" height="4" viewBox="0 0 5 4"><path d="M0 0h5L2.500 3.500z" fill="#444" /></Svg>
        </ScaleBox>
        <Divider />
        <StatusIcons>
          <IconButton aria-label="捕捉">
            <Svg width="14" height="14" viewBox="0 0 14 14">
              <path d="M.5 1.500h10v8H.5zM5.500 1.500v8M.5 5.500h10" stroke="#888" />
              <path d="M10.500 7v7M7 10.500h7" stroke="#3d8fcb" strokeWidth="1.400" />
            </Svg>
          </IconButton>
          <IconButton aria-label="格网">
            <Svg width="12" height="12" viewBox="0 0 12 12" stroke="#a8a8a8">
              <path d="M.5.5h11v11H.5zM3.500 0v12M6.500 0v12M9.500 0v12M0 3.500h12M0 6.500h12M0 9.500h12" />
            </Svg>
          </IconButton>
          <IconButton aria-label="校正">
            <Svg width="15" height="13" viewBox="0 0 15 13">
              <path d="M1.500 2.500h3v2h-3zM11 1v3M9.500 2.500h3M5 3.500h4M3 5v5M12 5v5" stroke="#6f7f88" />
              <path d="M1 8h13v4H1z" fill="#8cc4e4" />
              <path d="M5 7.500l5 4" stroke="#397fae" />
            </Svg>
          </IconButton>
          <IconButton aria-label="约束">
            <Svg width="13" height="13" viewBox="0 0 13 13" stroke="#959595">
              <path d="M6.500 0v4M6.500 9v4M0 6.500h4M9 6.500h4" />
              <path d="M5 5h3v3H5z" fill="#888" stroke="none" />
            </Svg>
          </IconButton>
          <IconButton aria-label="方向">
            <Svg width="15" height="13" viewBox="0 0 15 13">
              <path d="M1.500 10V3l4 6V2M9 1v11" stroke="#4a9dd0" strokeWidth="1.600" />
              <path d="M10 12l4-5M10.500 2c3 0 3 2 3 4M11.500 4.500l2 2 1-2.500" stroke="#4b88ad" />
            </Svg>
          </IconButton>
        </StatusIcons>
        <Divider />
        <Coords><Mixed text="103.1099093° 东 30.9594365° 北" /><Chevron size={9} /></Coords>
        <Divider />
        <Selected><ZoomLayerIcon blue /><Mixed text="所选要素: 0" /></Selected>
        <Divider />
        <IconButton $w={12} aria-label="暂停绘制">
          <Svg width="10" height="12" viewBox="0 0 10 12"><path d="M0 0h4v12H0zM6 0h4v12H6z" fill="#666" /></Svg>
        </IconButton>
        <Divider />
        <IconButton aria-label="刷新">
          <Svg width="14" height="14" viewBox="0 0 14 14">
            <path d="M1.500 6C2 1 9 0 11.500 4M12.500 8C12 13 5 14 2.500 10" stroke="#3590cc" strokeWidth="2.200" />
            <path d="M14 .5V6H8.500zM0 13.500V8h5.500z" fill="#3590cc" />
          </Svg>
        </IconButton>
      </StatusBar>
    </MapColumn>
  )
}

function Geoprocessing() {
  return (
    <ToolColumn>
      <Pane $active>
        <PaneHead $active><h2>地理处理</h2><PaneTools /></PaneHead>
        <SearchRow $start={6} $end={5}>
          <IconButton aria-label="返回">
            <Svg width="16" height="16" viewBox="0 0 16 16" stroke="#bcbcbc">
              <circle cx="8" cy="8" r="7" />
              <path d="M12 8H4.500M7.500 4.500 4 8l3.500 3.500" strokeWidth="1.300" />
            </Svg>
          </IconButton>
          <SearchBox>
            <input type="text" placeholder="查找工具" aria-label="查找工具" />
            <SearchIcon />
            <IconButton $w={14} aria-label="搜索选项"><Chevron color="#888" /></IconButton>
          </SearchBox>
          <IconButton aria-label="添加">
            <Svg width="16" height="16" viewBox="0 0 16 16" stroke="#6a6a6a">
              <circle cx="8" cy="8" r="7" />
              <path d="M8 3.500v9M3.500 8h9" strokeWidth="1.400" />
            </Svg>
          </IconButton>
        </SearchRow>
        <BoxTabs>
          <BoxTab>收藏夹</BoxTab>
          <BoxTab $active>工具箱</BoxTab>
        </BoxTabs>
        <TreeArea>
          <Tree>
            {toolTree.map(node => {
              const Icon = treeIcons[node.kind]
              return (
                <TreeRow key={node.kind + node.name} $kind={node.kind} $selected={node.selected}>
                  {node.kind !== 'tool' && <Caret open={node.open} />}
                  <TreeName><Icon /><Mixed text={node.name} /></TreeName>
                </TreeRow>
              )
            })}
          </Tree>
          <ScrollTrack>
            <Chevron up color="#777" />
            <ScrollThumb />
            <Chevron color="#777" />
          </ScrollTrack>
        </TreeArea>
      </Pane>
      <BottomTabs>
        <BottomTab $active>地理处理</BottomTab>
        <BottomTab>符号系统</BottomTab>
        <BottomTab>元素</BottomTab>
      </BottomTabs>
    </ToolColumn>
  )
}

function App() {
  return (
    <Window>
      <GlobalStyle />
      <TitleBar>
        <QuickAccess>
          <IconButton aria-label="新建"><ProjectIcon kind="new" /></IconButton>
          <IconButton aria-label="打开"><ProjectIcon kind="open" /></IconButton>
          <IconButton aria-label="保存"><ProjectIcon kind="save" /></IconButton>
          <SplitIcon>
            <IconButton aria-label="撤消"><UndoIcon /></IconButton>
            <IconButton $w={10} aria-label="撤消列表"><Chevron size={6} /></IconButton>
          </SplitIcon>
          <SplitIcon>
            <IconButton aria-label="恢复"><UndoIcon redo /></IconButton>
            <IconButton $w={10} aria-label="恢复列表"><Chevron size={6} /></IconButton>
          </SplitIcon>
          <IconButton $w={10} aria-label="自定义">
            <Svg width="8" height="8" viewBox="0 0 8 8" stroke="#555" strokeWidth="1.200"><path d="M.5 1h7M1.500 4 4 6.500 6.500 4" /></Svg>
          </IconButton>
        </QuickAccess>
        <TitleCenter>
          <Mono>Untitled</Mono>
          <SearchBox $round>
            <SearchIcon />
            <input type="text" placeholder="命令搜索(Alt+Q)" aria-label="命令搜索" />
          </SearchBox>
        </TitleCenter>
        <TitleRight>
          <span>未登录</span>
          <Avatar>
            <Svg width="8" height="10" viewBox="0 0 8 10" stroke="#777"><circle cx="4" cy="2.500" r="1.800" /><path d="M1 9.500V7c0-2.500 6-2.500 6 0v2.500z" /></Svg>
          </Avatar>
          <IconButton $w={28} aria-label="通知">
            <Svg width="12" height="14" viewBox="0 0 12 14" stroke="#666">
              <path d="M1 10.500h10L9.500 8.500V5c0-4.500-7-4.500-7 0v3.500zM4.500 12.500h3M6 .5v1" />
            </Svg>
          </IconButton>
          <IconButton $w={38} aria-label="帮助">
            <Svg width="6" height="10" viewBox="0 0 6 10" stroke="#777" strokeWidth="1.200">
              <path d="M.7 3C.7 0 5.300 0 5.300 2.700 5.300 4.500 3 4.500 3 7M3 8.500v1.300" />
            </Svg>
          </IconButton>
          <IconButton $w={38} aria-label="最小化"><Svg width="9" height="9" viewBox="0 0 9 9" stroke="#444"><path d="M0 4.500h9" /></Svg></IconButton>
          <IconButton $w={38} aria-label="最大化"><Svg width="9" height="9" viewBox="0 0 9 9" stroke="#444"><path d="M.5.5h8v8h-8z" /></Svg></IconButton>
          <IconButton $w={38} aria-label="关闭"><CloseIcon /></IconButton>
        </TitleRight>
      </TitleBar>
      <RibbonTabs>
        {ribbonTabs.map(name => (
          <RibbonTab key={name} $active={name === '地图'}><span>{name}</span></RibbonTab>
        ))}
        <ContextTabs>
          <RibbonTab $w={72}><span>栅格图层</span></RibbonTab>
          <RibbonTab $w={48}><span>数据</span></RibbonTab>
        </ContextTabs>
      </RibbonTabs>
      <Ribbon />
      <Workspace>
        <Contents />
        <MapView />
        <Geoprocessing />
      </Workspace>
    </Window>
  )
}

export default App;
